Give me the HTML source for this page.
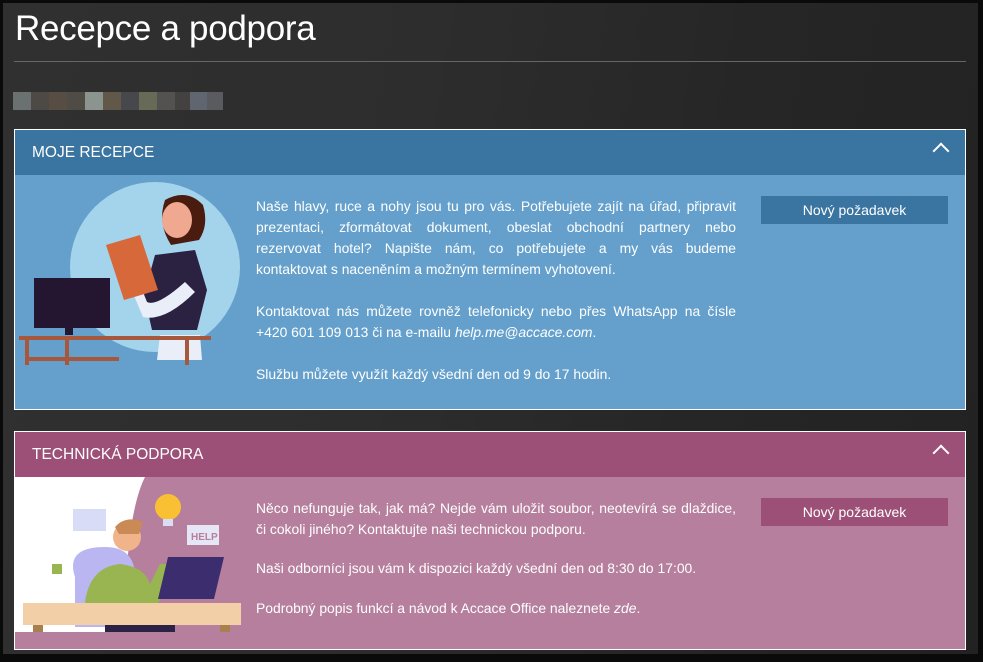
<!DOCTYPE html>
<html><head><meta charset="utf-8"><style>
*{margin:0;padding:0;box-sizing:border-box}
body{width:983px;height:662px;background:#0a0a0a;position:relative;overflow:hidden;font-family:"Liberation Sans",sans-serif;color:#fff}
#bg{position:absolute;left:3px;top:3px;width:975px;height:651px;background:linear-gradient(100deg,#303030 0%,#2d2d2d 40%,#262626 70%,#222 100%)}
h1{position:absolute;left:15px;top:9px;font-weight:normal;font-size:35px;letter-spacing:-0.3px;color:#fff}
.hr{position:absolute;left:14px;top:61px;width:952px;height:1px;background:#666}
.px{position:absolute;top:92px;height:18px;width:18px}
.panel{position:absolute;left:14px;width:952px;border:1px solid #fff}
.hd{height:45px;font-size:15.5px;padding:14px 0 0 17px;position:relative}
.chev{position:absolute;right:18px;top:15px;width:12px;height:12px;border-left:2px solid #fff;border-top:2px solid #fff;transform:rotate(45deg)}
.txt{position:absolute;left:241px;width:480px;font-size:13.9px;line-height:21px;text-align:justify}
.txt p{margin-bottom:21px}
.j{display:block;text-align:justify;text-align-last:justify;white-space:nowrap}
.btn{position:absolute;left:746px;width:187px;height:28px;font-size:14px;text-align:center;line-height:28px}
</style></head><body>
<div id="bg"></div>
<h1>Recepce a podpora</h1>
<div class="hr"></div>
<div class="px" style="left:13px;background:#6b7070"></div>
<div class="px" style="left:31px;background:#4d4944"></div>
<div class="px" style="left:49px;background:#574d43"></div>
<div class="px" style="left:67px;background:#4f4b45"></div>
<div class="px" style="left:85px;background:#8b948e"></div>
<div class="px" style="left:103px;background:#625849"></div>
<div class="px" style="left:121px;background:#46484c"></div>
<div class="px" style="left:139px;background:#676a56"></div>
<div class="px" style="left:157px;background:#535250"></div>
<div class="px" style="left:175px;background:#434240"></div>
<div class="px" style="left:190px;width:17px;background:#5f6670"></div>
<div class="px" style="left:207px;width:16px;background:#5a5b5e"></div>

<div class="panel" style="top:129px;height:281px;background:#64a0cb">
 <div class="hd" style="background:#3a74a0">MOJE RECEPCE<div class="chev"></div></div>
 <svg style="position:absolute;left:0;top:45px" width="240" height="190" viewBox="0 0 240 190">
  <circle cx="140" cy="92" r="85" fill="#a3d4ec"/>
  <path d="M150 25 q22-12 38 5 q6 20-4 35 l-28 5 q-14-22-6-45z" fill="#4a1c10"/>
  <ellipse cx="162" cy="45" rx="15" ry="18" fill="#f0a890"/>
  <path d="M140 80 l40 -5 l12 40 l-10 40 l-45 0 l-8 -35z" fill="#2b2140"/>
  <path d="M145 160 l40 0 l2 25 l-45 0z" fill="#eaeef8"/>
  <path d="M104 85 l10 -3 l18 45 q10 5 38 -20 l10 10 q-30 30 -52 25z" fill="#eaeef8"/>
  <path d="M91 70 l34 -10 l18 55 l-34 10z" fill="#d7683a"/>
  <rect x="19" y="103" width="76" height="50" fill="#241631"/>
  <rect x="50" y="153" width="8" height="7" fill="#241631"/>
  <rect x="4" y="161" width="192" height="4" fill="#a7583c"/>
  <rect x="10" y="165" width="4" height="26" fill="#a7583c"/>
  <rect x="50" y="165" width="4" height="26" fill="#a7583c"/>
  <rect x="10" y="182" width="94" height="4" fill="#a7583c"/>
  <rect x="170" y="165" width="4" height="26" fill="#a7583c"/>
 </svg>
 <div class="txt" style="top:66px">
  <p><span class="j">Naše hlavy, ruce a nohy jsou tu pro vás. Potřebujete zajít na úřad, připravit</span><span class="j">prezentaci, zformátovat dokument, obeslat obchodní partnery nebo</span><span class="j">rezervovat hotel? Napište nám, co potřebujete a my vás budeme</span>kontaktovat s naceněním a možným termínem vyhotovení.</p>
  <p><span class="j">Kontaktovat nás můžete rovněž telefonicky nebo přes WhatsApp na čísle</span>+420 601 109 013 či na e-mailu <i>help.me@accace.com</i>.</p>
  <p>Službu můžete využít každý všední den od 9 do 17 hodin.</p>
 </div>
 <div class="btn" style="top:66px;background:#3a74a0">Nový požadavek</div>
</div>

<div class="panel" style="top:431px;height:219px;background:#b57f9d">
 <div class="hd" style="background:#9c5078">TECHNICKÁ PODPORA<div class="chev"></div></div>
 <svg style="position:absolute;left:0;top:45px" width="240" height="155" viewBox="0 0 240 155">
  <rect width="240" height="155" fill="#fff"/>
  <path d="M130 0 L240 0 L240 155 L110 155 Q110 40 130 0z" fill="#b57f9d"/>
  <rect x="58" y="32" width="33" height="22" fill="#d8dcf6"/>
  <rect x="172" y="48" width="32" height="20" fill="#e6e7f6"/>
  <text x="176" y="63" font-size="10" font-family="Liberation Sans" font-weight="bold" fill="#b57f9d">HELP</text>
  <circle cx="153" cy="30" r="13" fill="#f9c034"/>
  <rect x="148" y="42" width="10" height="7" fill="#d8dcf6"/>
  <path d="M60 100 q-10 -30 30 -30 q30 0 30 30 l0 50 l-60 0z" fill="#b9b6f2"/>
  <path d="M70 125 q5 -35 35 -38 q25 3 30 20 l10 -20 l10 0 q-5 40 -20 45 l-50 5z" fill="#98b552"/>
  <circle cx="112" cy="60" r="14" fill="#f0b38a"/>
  <path d="M100 50 q10 -12 28 -5 l-4 12 l-20 0z" fill="#c98a55"/>
  <path d="M153 80 l56 0 l-10 42 l-56 0z" fill="#3c2d6e"/>
  <rect x="37" y="87" width="10" height="10" fill="#98b552"/>
  <rect x="8" y="126" width="218" height="22" fill="#f2cfa6"/>
  <rect x="18" y="148" width="10" height="7" fill="#a8804d"/>
  <rect x="205" y="148" width="10" height="7" fill="#a8804d"/>
  <rect x="90" y="148" width="70" height="7" fill="#2b2245"/>
 </svg>
 <div class="txt" style="top:66px">
  <p style="margin-bottom:18px">Něco nefunguje tak, jak má? Nejde vám uložit soubor, neotevírá se dlaždice, či cokoli jiného? Kontaktujte naši technickou podporu.</p>
  <p style="margin-bottom:19px">Naši odborníci jsou vám k dispozici každý všední den od 8:30 do 17:00.</p>
  <p>Podrobný popis funkcí a návod k Accace Office naleznete <i>zde</i>.</p>
 </div>
 <div class="btn" style="top:66px;background:#9c5078">Nový požadavek</div>
</div>
</body></html>
